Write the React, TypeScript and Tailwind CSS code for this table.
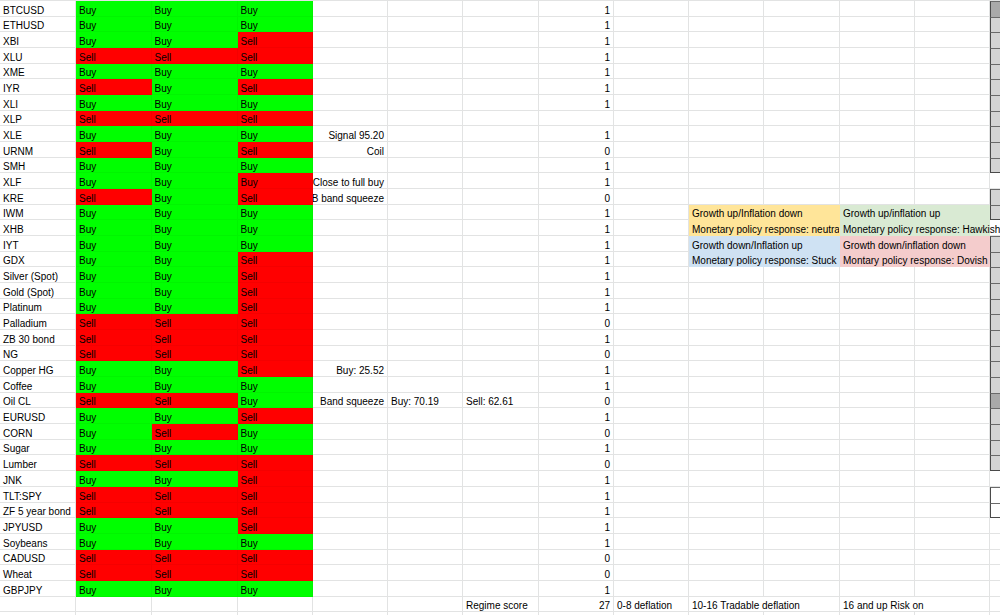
import clsx from "clsx";

type Cell = {
  t?: string;
  bg?: string;
  right?: boolean;
  span?: boolean;
  over?: boolean;
};

type Row = [string, string, string, number | null];

const rows: Row[] = [
  ["BTCUSD", "BBB", "", 1],
  ["ETHUSD", "BBB", "", 1],
  ["XBI", "BBS", "", 1],
  ["XLU", "SSS", "", 1],
  ["XME", "BBB", "", 1],
  ["IYR", "SBS", "", 1],
  ["XLI", "BBB", "", 1],
  ["XLP", "SSS", "", null],
  ["XLE", "BBB", "Signal 95.20", 1],
  ["URNM", "SBS", "Coil", 0],
  ["SMH", "BBB", "", 1],
  ["XLF", "BBR", "Close to full buy", 1],
  ["KRE", "SBS", "BB band squeeze", 0],
  ["IWM", "BBB", "", 1],
  ["XHB", "BBB", "", 1],
  ["IYT", "BBB", "", 1],
  ["GDX", "BBS", "", 1],
  ["Silver (Spot)", "BBS", "", 1],
  ["Gold (Spot)", "BBS", "", 1],
  ["Platinum", "BBS", "", 1],
  ["Palladium", "SSS", "", 0],
  ["ZB 30 bond", "SSS", "", 1],
  ["NG", "SSS", "", 0],
  ["Copper HG", "BBS", "Buy: 25.52", 1],
  ["Coffee", "BBB", "", 1],
  ["Oil CL", "SSB", "Band squeeze", 0],
  ["EURUSD", "BBS", "", 1],
  ["CORN", "BSB", "", 0],
  ["Sugar", "BBB", "", 1],
  ["Lumber", "SSS", "", 0],
  ["JNK", "BBS", "", 1],
  ["TLT:SPY", "SSS", "", 1],
  ["ZF 5 year bond", "SSS", "", 1],
  ["JPYUSD", "BBS", "", 1],
  ["Soybeans", "BBB", "", 1],
  ["CADUSD", "SSS", "", 0],
  ["Wheat", "SSS", "", 0],
  ["GBPJPY", "BBB", "", 1],
];

const GREEN = "bg-[#00ff00] border-black/[0.04]";
const RED = "bg-[#ff0000] border-black/[0.04]";
const YELLOW = "bg-[#ffe599] border-[#ffe599]";
const SAGE = "bg-[#d9ead3] border-[#d9ead3]";
const BLUE = "bg-[#cfe2f3] border-[#cfe2f3]";
const PINK = "bg-[#f4cccc] border-[#f4cccc]";

// quadrant box, rows 14-17 (0-based 13-16)
const quadrant: Record<number, [string, string, string, string]> = {
  13: ["Growth up/Inflation down", YELLOW, "Growth up/inflation up", SAGE],
  14: ["Monetary policy response: neutral", YELLOW, "Monetary policy response: Hawkish", SAGE],
  15: ["Growth down/Inflation up", BLUE, "Growth down/inflation down", PINK],
  16: ["Monetary policy response: Stuck", BLUE, "Montary policy response: Dovish", PINK],
};

// right edge column: gray boxes, white boxes, or plain
function edgeKind(i: number): "dark" | "gray" | "white" | "plain" {
  if (i === 0 || i === 25) return "dark";
  if (i <= 10) return "gray";
  if (i === 12 || i === 13) return "gray";
  if (i >= 15 && i <= 29) return "gray";
  if (i === 31 || i === 32) return "white";
  return "plain";
}

function edgeLast(i: number) {
  return i === 10 || i === 13 || i === 29 || i === 32;
}

function SheetCell({ c }: { c: Cell }) {
  return (
    <div
      className={clsx(
        "flex h-[15.68px] min-w-0 items-end whitespace-nowrap border-b border-r px-[3px] leading-[11px]",
        c.bg ?? "border-[#e2e3e3]",
        c.right && "justify-end",
        c.span && "col-span-2",
        c.over ? "relative z-10 overflow-visible" : "overflow-hidden"
      )}
    >
      <span className="shrink-0">{c.t}</span>
    </div>
  );
}

function EdgeCell({ i }: { i: number }) {
  const kind = edgeKind(i);
  if (kind === "plain") {
    return <div className="h-[15.68px] border-b border-[#e2e3e3]" />;
  }
  return (
    <div
      className={clsx(
        "h-[15.68px] border-l border-t border-l-[#4a4a4a] border-t-[#6a6a6a]",
        edgeLast(i) ? "border-b border-b-[#4a4a4a]" : "border-b-0",
        kind === "dark" && "bg-[#a9a9a9]",
        kind === "gray" && "bg-[#d4d4d4]",
        kind === "white" && "bg-white"
      )}
    />
  );
}

function buildRow(i: number): Cell[] {
  const [name, sig, note, score] = rows[i];
  const cells: Cell[] = [{ t: name }];
  for (const s of sig) {
    if (s === "B") cells.push({ t: "Buy", bg: GREEN });
    else if (s === "S") cells.push({ t: "Sell", bg: RED });
    else cells.push({ t: "Buy", bg: RED });
  }
  cells.push({ t: note, right: true });
  if (name === "Oil CL") {
    cells.push({ t: "Buy: 70.19" }, { t: "Sell: 62.61" });
  } else {
    cells.push({}, {});
  }
  cells.push({ t: score === null ? "" : String(score), right: true });
  cells.push({});
  const q = quadrant[i];
  if (q) {
    cells.push({ t: q[0], bg: q[1], span: true });
    cells.push({ t: q[2], bg: q[3], span: true, over: i === 14 });
  } else {
    cells.push({}, {}, {}, {});
  }
  return cells;
}

const regimeRow: Cell[] = [
  {}, {}, {}, {}, {}, {},
  { t: "Regime score" },
  { t: "27", right: true },
  { t: "0-8 deflation" },
  { t: "10-16 Tradable deflation", span: true },
  { t: "16 and up Risk on", span: true },
];

const GRID =
  "grid grid-cols-[76px_75.5px_86px_75.5px_75px_75px_75.5px_75.5px_75px_75px_76px_75px_75px_1fr]";

export default function App() {
  return (
    <div className="h-[615px] w-[1000px] overflow-hidden bg-white font-['Liberation_Sans',Arial,sans-serif] text-[10px] text-black">
      <div className="border-t border-[#e2e3e3]">
        {rows.map((_, i) => (
          <div key={i} className={GRID}>
            {buildRow(i).map((c, j) => (
              <SheetCell key={j} c={c} />
            ))}
            <EdgeCell i={i} />
          </div>
        ))}
        <div className={GRID}>
          {regimeRow.map((c, j) => (
            <SheetCell key={j} c={c} />
          ))}
          <EdgeCell i={38} />
        </div>
        <div className={GRID}>
          {Array.from({ length: 13 }).map((_, j) => (
            <SheetCell key={j} c={{}} />
          ))}
          <EdgeCell i={39} />
        </div>
      </div>
    </div>
  );
}
